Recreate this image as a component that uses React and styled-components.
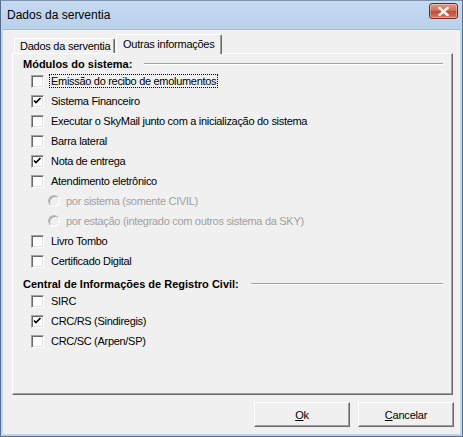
import React from "react";
import styled, { createGlobalStyle } from "styled-components";

const GlobalStyle = createGlobalStyle`
  html, body {
    margin: 0;
    padding: 0;
    background: #f0f0f0;
  }
`;

const Window = styled.div`
  width: 463px;
  height: 437px;
  box-sizing: border-box;
  display: flex;
  flex-direction: column;
  background: #bfd4ee;
  border: 1px solid #55708f;
  border-top-color: #7d93ad;
  font-family: Tahoma, "Liberation Sans", sans-serif;
`;

const TitleBar = styled.div`
  height: 28px;
  flex: none;
  display: flex;
  align-items: center;
  justify-content: space-between;
  padding: 0 4px 0 6px;
  background: linear-gradient(#c6daf1, #b9d1ea);
  font-family: "Liberation Sans", sans-serif;
  font-size: 12px;
  color: #000;
`;

const CloseButton = styled.div`
  width: 29px;
  height: 16px;
  margin-top: -8px;
  box-sizing: border-box;
  border: 1px solid #6b2a1f;
  border-radius: 3px;
  background: linear-gradient(#e49c89, #d06b56 50%, #c04a33 52%, #d37a60);
  box-shadow: inset 0 0 0 1px rgba(255, 255, 255, 0.35);
  display: flex;
  align-items: center;
  justify-content: center;
`;

const Client = styled.div`
  flex: 1;
  display: flex;
  flex-direction: column;
  margin: 0 2px 2px 2px;
  background: #f0f0f0;
  border-top: 1px solid #a9bcd3;
`;

const TabStrip = styled.div`
  height: 23px;
  flex: none;
  display: flex;
  align-items: flex-end;
  padding-left: 11px;
`;

const Tab = styled.div`
  position: relative;
  box-sizing: border-box;
  height: ${(p) => (p.$active ? "20px" : "15px")};
  width: ${(p) => p.$w}px;
  margin-left: ${(p) => (p.$active ? "1px" : "0")};
  margin-bottom: ${(p) => (p.$active ? "-1px" : "0")};
  z-index: ${(p) => (p.$active ? 2 : 0)};
  background: #f0f0f0;
  border-top: 1px solid #fff;
  border-left: 1px solid #fff;
  border-right: 1px solid #696969;
  box-shadow: inset -1px 0 0 #a0a0a0;
  border-radius: 2px 2px 0 0;
  font-size: 11px;
  line-height: 13px;
  letter-spacing: -0.25px;
  color: #000;
  padding: ${(p) => (p.$active ? "3px 0 0 6px" : "1px 0 0 5px")};
  white-space: nowrap;
`;

const Panel = styled.div`
  height: 342px;
  flex: none;
  box-sizing: border-box;
  margin: 0 7px 0 9px;
  border-top: 1px solid #fff;
  border-left: 1px solid #fff;
  border-right: 1px solid #696969;
  border-bottom: 1px solid #696969;
  box-shadow: inset -1px -1px 0 #a0a0a0;
  padding: 3px 9px 0 10px;
  display: flex;
  flex-direction: column;
`;

const GroupHeader = styled.div`
  display: flex;
  align-items: center;
  height: 14px;
  margin-top: ${(p) => p.$top || 0}px;
  font-size: 11px;
  font-weight: bold;
  color: #000;
  white-space: nowrap;
  &::after {
    content: "";
    flex: 1;
    margin-left: 12px;
    height: 0;
    border-top: 1px solid #a0a0a0;
    border-bottom: 1px solid #fff;
  }
`;

const Row = styled.div`
  display: flex;
  align-items: center;
  height: 20px;
  padding-left: ${(p) => p.$indent}px;
  font-size: 11px;
  letter-spacing: -0.3px;
  color: ${(p) => (p.$disabled ? "#a0a0a0" : "#000")};
  white-space: nowrap;
`;

const Box = styled.span`
  flex: none;
  position: relative;
  width: 13px;
  height: 13px;
  box-sizing: border-box;
  margin-right: 6px;
  background: #fff;
  border-top: 1px solid #a0a0a0;
  border-left: 1px solid #a0a0a0;
  border-right: 1px solid #fff;
  border-bottom: 1px solid #fff;
  box-shadow: inset 1px 1px 0 #696969, inset -1px -1px 0 #e3e3e3;
`;

const Radio = styled.span`
  flex: none;
  width: 12px;
  height: 12px;
  box-sizing: border-box;
  margin-right: 5px;
  border-radius: 50%;
  background: #f0f0f0;
  border: 1px solid #b8b8b8;
  border-right-color: #fff;
  border-bottom-color: #fff;
  box-shadow: inset 1px 1px 0 #a0a0a0;
`;

const Label = styled.span`
  padding: 0 1px;
  outline: ${(p) => (p.$focus ? "1px dotted #000" : "none")};
  line-height: 12px;
`;

const Footer = styled.div`
  flex: none;
  display: flex;
  justify-content: flex-end;
  gap: 8px;
  margin-top: 7px;
  padding-right: 6px;
`;

const Button = styled.div`
  width: 96px;
  height: 25px;
  box-sizing: border-box;
  display: flex;
  align-items: center;
  justify-content: center;
  background: #f0f0f0;
  border-top: 1px solid #fff;
  border-left: 1px solid #fff;
  border-right: 1px solid #696969;
  border-bottom: 1px solid #696969;
  box-shadow: inset -1px -1px 0 #a0a0a0;
  font-size: 11px;
  letter-spacing: -0.2px;
  color: #000;
`;

const Check = () => (
  <svg
    width="9"
    height="9"
    viewBox="0 0 9 9"
    style={{ position: "absolute", left: 1, top: 1 }}
  >
    <path
      d="M1 3.5 L3 5.5 L7.5 1"
      fill="none"
      stroke="#000"
      strokeWidth="1.7"
    />
  </svg>
);

const CheckRow = ({ checked, focus, children }) => (
  <Row $indent={8}>
    <Box>{checked && <Check />}</Box>
    <Label $focus={focus}>{children}</Label>
  </Row>
);

const RadioRow = ({ children }) => (
  <Row $indent={25} $disabled>
    <Radio />
    <Label>{children}</Label>
  </Row>
);

export default function App() {
  return (
    <>
      <GlobalStyle />
      <Window>
        <TitleBar>
          <span>Dados da serventia</span>
          <CloseButton>
            <svg width="11" height="9" viewBox="0 0 11 9">
              <path
                d="M1.5 1 L9.5 8 M9.5 1 L1.5 8"
                stroke="#fff"
                strokeWidth="2.4"
                strokeLinecap="square"
              />
            </svg>
          </CloseButton>
        </TitleBar>
        <Client>
          <TabStrip>
            <Tab $w={101}>Dados da serventia</Tab>
            <Tab $w={106} $active>
              Outras informações
            </Tab>
          </TabStrip>
          <Panel>
            <GroupHeader>Módulos do sistema:</GroupHeader>
            <CheckRow focus>Emissão do recibo de emolumentos</CheckRow>
            <CheckRow checked>Sistema Financeiro</CheckRow>
            <CheckRow>Executar o SkyMail junto com a inicialização do sistema</CheckRow>
            <CheckRow>Barra lateral</CheckRow>
            <CheckRow checked>Nota de entrega</CheckRow>
            <CheckRow>Atendimento eletrônico</CheckRow>
            <RadioRow>por sistema (somente CIVIL)</RadioRow>
            <RadioRow>por estação (integrado com outros sistema da SKY)</RadioRow>
            <CheckRow>Livro Tombo</CheckRow>
            <CheckRow>Certificado Digital</CheckRow>
            <GroupHeader $top={6}>Central de Informações de Registro Civil:</GroupHeader>
            <CheckRow>SIRC</CheckRow>
            <CheckRow checked>CRC/RS (Sindiregis)</CheckRow>
            <CheckRow>CRC/SC (Arpen/SP)</CheckRow>
          </Panel>
          <Footer>
            <Button>
              <span>
                <u>O</u>k
              </span>
            </Button>
            <Button>
              <span>
                <u>C</u>ancelar
              </span>
            </Button>
          </Footer>
        </Client>
      </Window>
    </>
  );
}
